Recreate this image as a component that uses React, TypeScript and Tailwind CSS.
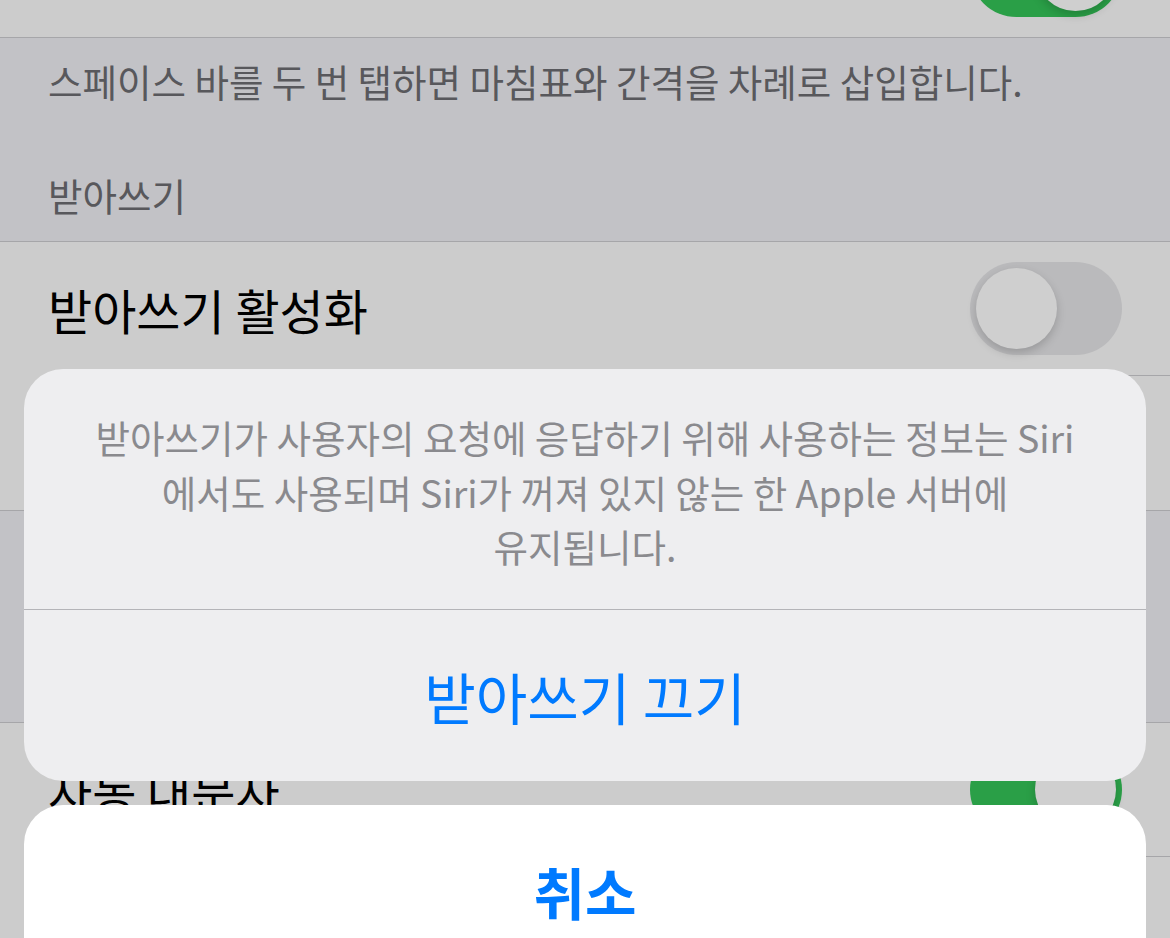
import React from 'react';

const font = { fontFamily: '"Noto Sans CJK KR", "Noto Sans", sans-serif' };

const Toggle: React.FC<{ on: boolean }> = ({ on }) => (
  <div
    className={`w-[152px] h-[93px] rounded-full p-[6px] flex ${
      on ? 'bg-[#2a9f47] justify-end' : 'bg-[#bababc] justify-start'
    }`}
  >
    <div className="w-[81px] h-[81px] rounded-full bg-[#cfcfcf] shadow-[0_4px_10px_rgba(0,0,0,0.18)]" />
  </div>
);

const Row: React.FC<{ label?: string; toggle?: boolean; on?: boolean; last?: boolean }> = ({
  label,
  toggle,
  on,
  last,
}) => (
  <div className="bg-[#cccccc] pl-[48px]">
    <div
      className={`h-[134px] flex items-center justify-between pr-[48px] ${
        last ? '' : 'border-b border-[#a6a6a9]'
      }`}
    >
      <span className="text-[48px] text-black leading-none">{label}</span>
      {toggle && <Toggle on={!!on} />}
    </div>
  </div>
);

export default function App() {
  return (
    <div className="relative w-[1170px] h-[938px] overflow-hidden bg-[#c2c2c6]" style={font}>
      {/* settings list (dimmed) */}
      <div className="-mt-[96px]">
        <div className="bg-[#cccccc] border-b border-[#a6a6a9]">
          <div className="h-[133px] flex items-center justify-end pr-[48px]">
            <Toggle on />
          </div>
        </div>

        <div className="h-[203px] flex flex-col px-[48px] text-[37.5px] text-[#58585c]">
          <p className="mt-[19px] leading-[48px]">
            스페이스 바를 두 번 탭하면 마침표와 간격을 차례로 삽입합니다.
          </p>
          <p className="mt-[66px] leading-[48px]">받아쓰기</p>
        </div>

        <div className="border-t border-b border-[#a6a6a9]">
          <Row label="받아쓰기 활성화" toggle />
          <Row last />
        </div>

        <div className="h-[211px]" />

        <div className="border-t border-[#a6a6a9]">
          <Row label="자동 대문자" toggle on />
          <Row toggle on />
        </div>
      </div>

      {/* action sheet */}
      <div className="absolute left-[24px] right-[24px] top-[369px] flex flex-col gap-[24px]">
        <div className="rounded-[39px] bg-[#eeeef0] overflow-hidden">
          <div className="h-[240px] pt-[6px] flex items-center justify-center text-center text-[37.5px] leading-[54.5px] text-[#8a8a8e]">
            <p>
              받아쓰기가 사용자의 요청에 응답하기 위해 사용하는 정보는 Siri
              <br />
              에서도 사용되며 Siri가 꺼져 있지 않는 한 Apple 서버에
              <br />
              유지됩니다.
            </p>
          </div>
          <div className="h-px bg-[#b4b4b8]" />
          <button className="w-full h-[171px] flex items-center justify-center text-[56px] text-[#007aff]">
            받아쓰기 끄기
          </button>
        </div>
        <div className="rounded-[39px] bg-white h-[171px] flex items-center justify-center">
          <span className="text-[56px] font-semibold text-[#007aff]">취소</span>
        </div>
      </div>
    </div>
  );
}
